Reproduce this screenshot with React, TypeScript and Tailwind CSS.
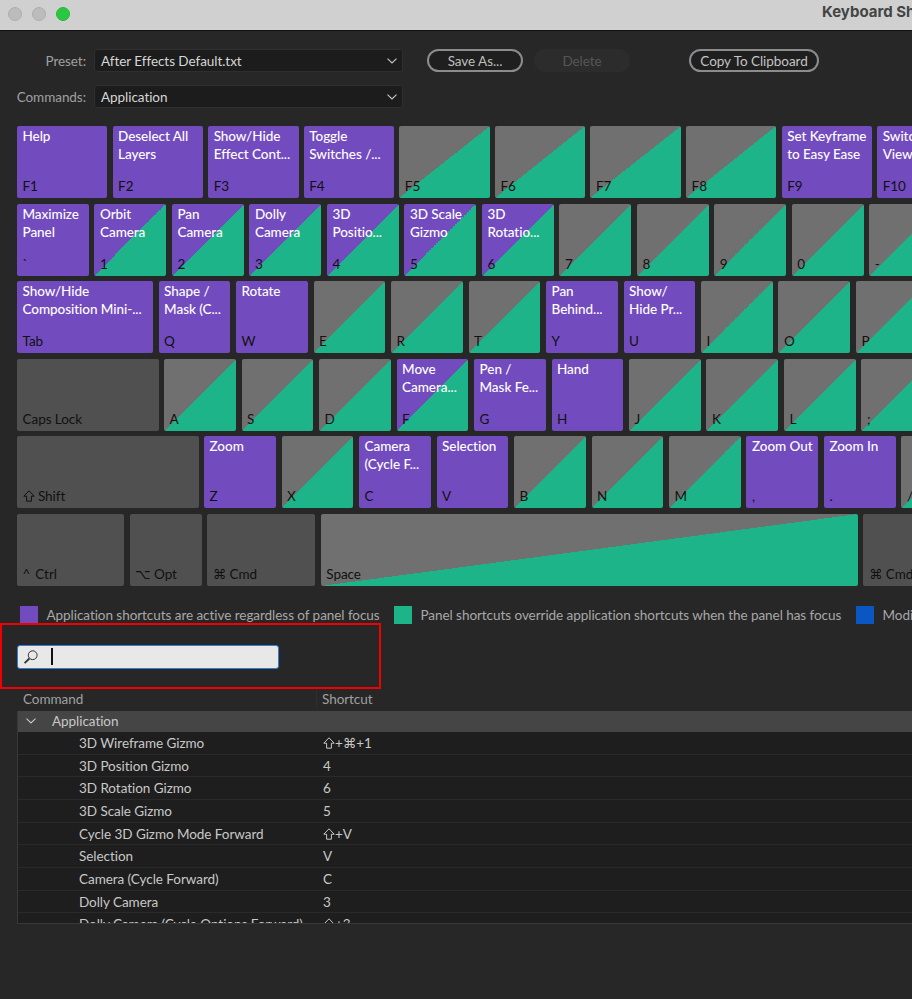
import { ReactNode } from "react"

type Kind = "app" | "panel" | "mix" | "none"
type KeyDef = { k: string; t?: string; kind: Kind }

const app = (k: string, t: string): KeyDef => ({ k, t, kind: "app" })
const mix = (k: string, t: string): KeyDef => ({ k, t, kind: "mix" })
const panel = (k: string): KeyDef => ({ k, kind: "panel" })
const none = (k: string): KeyDef => ({ k, kind: "none" })

const rows: { cols: string; keys: KeyDef[] }[] = [
  {
    cols: "grid-cols-[repeat(10,90.4px)] gap-x-[5.2px]",
    keys: [
      app("F1", "Help"),
      app("F2", "Deselect All\nLayers"),
      app("F3", "Show/Hide\nEffect Cont..."),
      app("F4", "Toggle\nSwitches /..."),
      panel("F5"),
      panel("F6"),
      panel("F7"),
      panel("F8"),
      app("F9", "Set Keyframe\nto Easy Ease"),
      app("F10", "Switch 3D\nView"),
    ],
  },
  {
    cols: "grid-cols-[repeat(12,71.9px)] gap-x-[5.6px]",
    keys: [
      app("`", "Maximize\nPanel"),
      mix("1", "Orbit\nCamera"),
      mix("2", "Pan\nCamera"),
      mix("3", "Dolly\nCamera"),
      mix("4", "3D\nPositio..."),
      mix("5", "3D Scale\nGizmo"),
      mix("6", "3D\nRotatio..."),
      panel("7"),
      panel("8"),
      panel("9"),
      panel("0"),
      panel("-"),
    ],
  },
  {
    cols: "grid-cols-[136px_repeat(10,71.9px)] gap-x-[5.6px]",
    keys: [
      app("Tab", "Show/Hide\nComposition Mini-..."),
      app("Q", "Shape /\nMask (C..."),
      app("W", "Rotate"),
      panel("E"),
      panel("R"),
      panel("T"),
      app("Y", "Pan\nBehind..."),
      app("U", "Show/\nHide Pr..."),
      panel("I"),
      panel("O"),
      panel("P"),
    ],
  },
  {
    cols: "grid-cols-[141.5px_repeat(10,71.9px)] gap-x-[5.6px]",
    keys: [
      none("Caps Lock"),
      panel("A"),
      panel("S"),
      panel("D"),
      mix("F", "Move\nCamera..."),
      app("G", "Pen /\nMask Fe..."),
      app("H", "Hand"),
      panel("J"),
      panel("K"),
      panel("L"),
      panel(";"),
    ],
  },
  {
    cols: "grid-cols-[181.5px_repeat(10,71.9px)] gap-x-[5.6px]",
    keys: [
      none("⇧ Shift"),
      app("Z", "Zoom"),
      panel("X"),
      app("C", "Camera\n(Cycle F..."),
      app("V", "Selection"),
      panel("B"),
      panel("N"),
      panel("M"),
      app(",", "Zoom Out"),
      app(".", "Zoom In"),
      panel("/"),
    ],
  },
  {
    cols: "grid-cols-[107px_72px_108px_537px_100px] gap-x-[5.6px]",
    keys: [none("^\u2009 Ctrl"), none("⌥ Opt"), none("⌘ Cmd"), panel("Space"), none("⌘ Cmd")],
  },
]

const commands = [
  ["3D Wireframe Gizmo", "⇧+⌘+1"],
  ["3D Position Gizmo", "4"],
  ["3D Rotation Gizmo", "6"],
  ["3D Scale Gizmo", "5"],
  ["Cycle 3D Gizmo Mode Forward", "⇧+V"],
  ["Selection", "V"],
  ["Camera (Cycle Forward)", "C"],
  ["Dolly Camera", "3"],
  ["Dolly Camera (Cycle Options Forward)", "⇧+3"],
]

const kindClass: Record<Kind, string> = {
  app: "bg-[#724bbf]",
  panel: "bg-[linear-gradient(to_bottom_right,#707070_50%,#1db48a_50%)]",
  mix: "bg-[linear-gradient(to_bottom_right,#724bbf_50%,#1db48a_50%)]",
  none: "bg-[#505050]",
}

function ShiftIcon() {
  return (
    <svg width="12" height="12" viewBox="0 0 12 12" fill="none" stroke="currentColor" strokeWidth="1" className="inline-block align-[-1px]">
      <path d="M6 0.8 11.2 6.2H8.4V11.2H3.6V6.2H0.8Z" />
    </svg>
  )
}

// the shift arrow of the mac keyboard is wider than the font's glyph
function Shortcut({ text }: { text: string }) {
  return (
    <>
      {text.startsWith("⇧") && <ShiftIcon />}
      {text.replace("⇧", "")}
    </>
  )
}

function Key({ def }: { def: KeyDef }) {
  return (
    <div className={`flex h-[72px] flex-col justify-between rounded-[2px] px-[5.5px] pt-[1px] pb-[3px] ${kindClass[def.kind]}`}>
      <div className="leading-[18px] font-medium whitespace-pre text-white">{def.t}</div>
      <div className="leading-[18px] whitespace-pre text-[#111]">
        <Shortcut text={def.k} />
      </div>
    </div>
  )
}

function Chevron({ className }: { className?: string }) {
  return (
    <svg width="10" height="6" viewBox="0 0 10 6" fill="none" stroke="currentColor" strokeWidth="1.1" className={className}>
      <path d="M0.5 0.7 5 5 9.5 0.7" />
    </svg>
  )
}

function Select({ value }: { value: string }) {
  return (
    <div className="flex h-[23px] w-[309px] items-center justify-between rounded-[3px] border border-[#2f2f2f] bg-[#1c1c1c] pr-[5px] pl-[6px] text-[#d6d6d6]">
      <span className="pt-[1px]">{value}</span>
      <Chevron className="text-[#c8c8c8]" />
    </div>
  )
}

function Pill({ children, className }: { children: ReactNode; className: string }) {
  return <div className={`flex h-[23px] items-center justify-center rounded-full pt-[1px] ${className}`}>{children}</div>
}

function Legend({ color, text, className }: { color: string; text: string; className: string }) {
  return (
    <div className={`flex shrink-0 items-center gap-[8.5px] whitespace-nowrap ${className}`}>
      <div className={`h-[18px] w-[18px] shrink-0 ${color}`} />
      <span>{text}</span>
    </div>
  )
}

export default function App() {
  return (
    <div className="relative flex h-[999px] w-[912px] flex-col overflow-hidden bg-[#272727] font-['Lato','Noto_Sans','DejaVu_Sans',sans-serif] text-[13.5px] tracking-[-0.05px] text-[#c4c4c4]">
      {/* title bar */}
      <div className="relative flex h-[31px] shrink-0 items-start border-b border-[#111] bg-[#d0d0d0]">
        <div className="flex gap-[10px] pt-[7px] pl-[8px]">
          <div className="h-[14px] w-[14px] rounded-full border border-[#aeaeae] bg-[#bcbcbc]" />
          <div className="h-[14px] w-[14px] rounded-full border border-[#aeaeae] bg-[#bcbcbc]" />
          <div className="h-[14px] w-[14px] rounded-full border border-[#25b93a] bg-[#2ac840]" />
        </div>
        <div className="ml-[752px] pt-[3px] font-['Inter',sans-serif] text-[15px] leading-[18px] font-bold tracking-normal whitespace-nowrap text-[#444]">
          Keyboard Shortcuts
        </div>
      </div>

      {/* preset + commands */}
      <div className="flex items-center pt-[18px]">
        <div className="w-[86px] pt-[1px] text-right text-[#a0a0a0]">Preset:</div>
        <div className="ml-[8px]">
          <Select value="After Effects Default.txt" />
        </div>
        <Pill className="ml-[24px] w-[96px] border-2 border-[#8c8c8c] bg-[#1f1f1f] text-[#bdbdbd]">Save As...</Pill>
        <Pill className="ml-[11px] w-[96px] bg-[#2c2c2c] text-[#565656]">Delete</Pill>
        <Pill className="ml-[59px] w-[130px] border-2 border-[#8c8c8c] bg-[#1f1f1f] text-[#c4c4c4]">Copy To Clipboard</Pill>
      </div>
      <div className="flex items-center pt-[13px]">
        <div className="w-[86px] pt-[1px] text-right text-[#a0a0a0]">Commands:</div>
        <div className="ml-[8px]">
          <Select value="Application" />
        </div>
      </div>

      {/* keyboard */}
      <div className="flex flex-col gap-y-[5.6px] pt-[18px] pl-[17px]">
        {rows.map((row, i) => (
          <div key={i} className={`grid ${row.cols}`}>
            {row.keys.map((def, j) => (
              <Key key={j} def={def} />
            ))}
          </div>
        ))}
      </div>

      {/* legend */}
      <div className="flex pt-[20px] pl-[20px] leading-[18px] text-[#a8a8a8]">
        <Legend color="bg-[#724bbf]" text="Application shortcuts are active regardless of panel focus" className="w-[374px]" />
        <Legend color="bg-[#1db48a]" text="Panel shortcuts override application shortcuts when the panel has focus" className="w-[462px]" />
        <Legend color="bg-[#0a56c2]" text="Modifiers" className="" />
      </div>

      {/* search */}
      <div className="pt-[21px] pl-[17px]">
        <div className="flex h-[24px] w-[262px] items-center rounded-[3px] border-[1.5px] border-[#2f7fd6] bg-[#e8e8e8]">
          <svg width="16" height="16" viewBox="0 0 16 16" fill="none" stroke="#333" className="ml-[5px]">
            <circle cx="9.7" cy="6.2" r="4.4" strokeWidth="1" />
            <path d="M6.4 9.5 1.6 14.2" strokeWidth="1.8" />
          </svg>
          <div className="ml-[12px] h-[17px] w-[2px] bg-[#111]" />
        </div>
      </div>

      {/* table */}
      <div className="mt-[19px] flex h-[23px] items-center pl-[23px] text-[#a0a0a0]">
        <div className="w-[293px] leading-[18px]">Command</div>
        <div className="border-l border-[#2f2f2f] pl-[5px] leading-[18px]">Shortcut</div>
      </div>
      <div className="ml-[17px] h-[213px] overflow-hidden border-b border-l border-[#383838] bg-[#1e1e1e]">
        <div className="flex h-[21px] items-center bg-[#454545] text-[#c8c8c8]">
          <Chevron className="ml-[8px] text-[#c8c8c8]" />
          <span className="ml-[16px]">Application</span>
        </div>
        {commands.map(([name, shortcut]) => (
          <div key={name} className="flex h-[22.67px] items-center border-b border-[#2a2a2a] pt-[1px] text-[#c8c8c8]">
            <div className="w-[305px] pl-[61px] whitespace-nowrap">{name}</div>
            <div className="whitespace-nowrap">
              <Shortcut text={shortcut} />
            </div>
          </div>
        ))}
      </div>

      {/* red annotation box */}
      <div className="absolute top-[623px] left-0 h-[66px] w-[381px] border-2 border-[#f00000]" />
    </div>
  )
}
